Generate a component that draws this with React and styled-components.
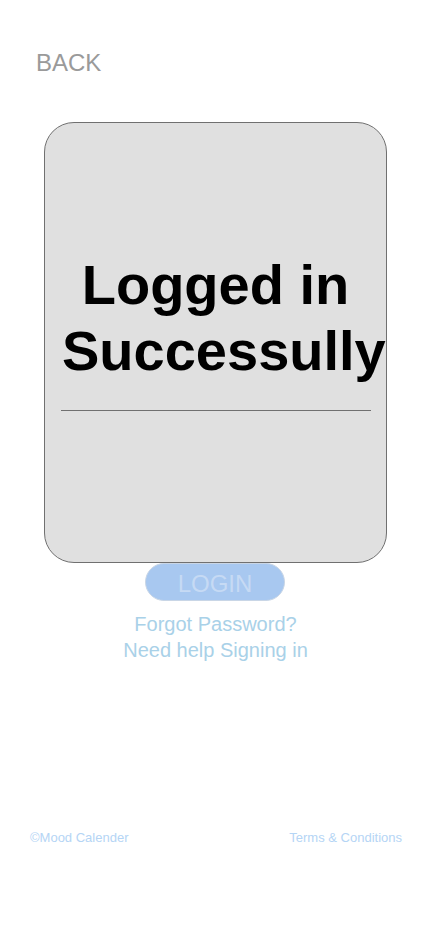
import React from 'react';
import styled, { createGlobalStyle } from 'styled-components';

const GlobalStyle = createGlobalStyle`
  html, body {
    margin: 0;
    padding: 0;
    background: #FFFFFF;
  }
  body {
    font-family: "Liberation Sans", Arial, sans-serif;
  }
`;

const Page = styled.div`
  width: 428px;
  min-height: 926px;
  display: flex;
  flex-direction: column;
  align-items: stretch;
  box-sizing: border-box;
  padding: 49px 0 81px;
`;

const BackLink = styled.a`
  align-self: flex-start;
  margin-left: 36px;
  font-size: 24px;
  line-height: 28px;
  color: #9a9a9a;
  text-decoration: none;
  cursor: pointer;
`;

const Card = styled.div`
  margin: 45px 0 0 44px;
  width: 343px;
  height: 441px;
  box-sizing: border-box;
  background: #E0E0E0;
  border: 1px solid #707070;
  border-radius: 30px;
  padding: 129px 17px 0;
  display: flex;
  flex-direction: column;
`;

const Title = styled.h1`
  margin: 0;
  font-size: 56px;
  line-height: 66px;
  font-weight: 700;
  color: #000000;
  text-align: center;
  white-space: nowrap;
`;

const Divider = styled.hr`
  margin: 26px 0 0 -1px;
  width: 310px;
  border: 0;
  border-top: 1px solid #707070;
`;

const LoginButton = styled.button`
  align-self: center;
  margin: 0 0 0 2px;
  width: 140px;
  height: 38px;
  border: 1px solid #c9d6e6;
  border-radius: 19px;
  background: #A8C8F0;
  color: #C6DAF4;
  font-family: inherit;
  font-size: 24px;
  padding: 4px 0 0;
  cursor: pointer;
`;

const HelpLinks = styled.div`
  margin: 10px 0 0 3px;
  display: flex;
  flex-direction: column;
  align-items: center;
`;

const HelpLink = styled.a`
  font-size: 20px;
  line-height: 26px;
  color: #A9D1E8;
  text-decoration: none;
`;

const Footer = styled.footer`
  margin-top: auto;
  display: flex;
  justify-content: space-between;
  padding: 0 26px 0 30px;
  font-size: 13px;
  line-height: 15px;
  color: #B5D5F5;
`;

const App = () => {
  return (
    <>
      <GlobalStyle />
      <Page>
        <BackLink>BACK</BackLink>
        <Card>
          <Title>
            Logged in
            <br />
            Successully
          </Title>
          <Divider />
        </Card>
        <LoginButton>LOGIN</LoginButton>
        <HelpLinks>
          <HelpLink>Forgot Password?</HelpLink>
          <HelpLink>Need help Signing in</HelpLink>
        </HelpLinks>
        <Footer>
          <span>©Mood Calender</span>
          <span>Terms &amp; Conditions</span>
        </Footer>
      </Page>
    </>
  );
};

export default App;
